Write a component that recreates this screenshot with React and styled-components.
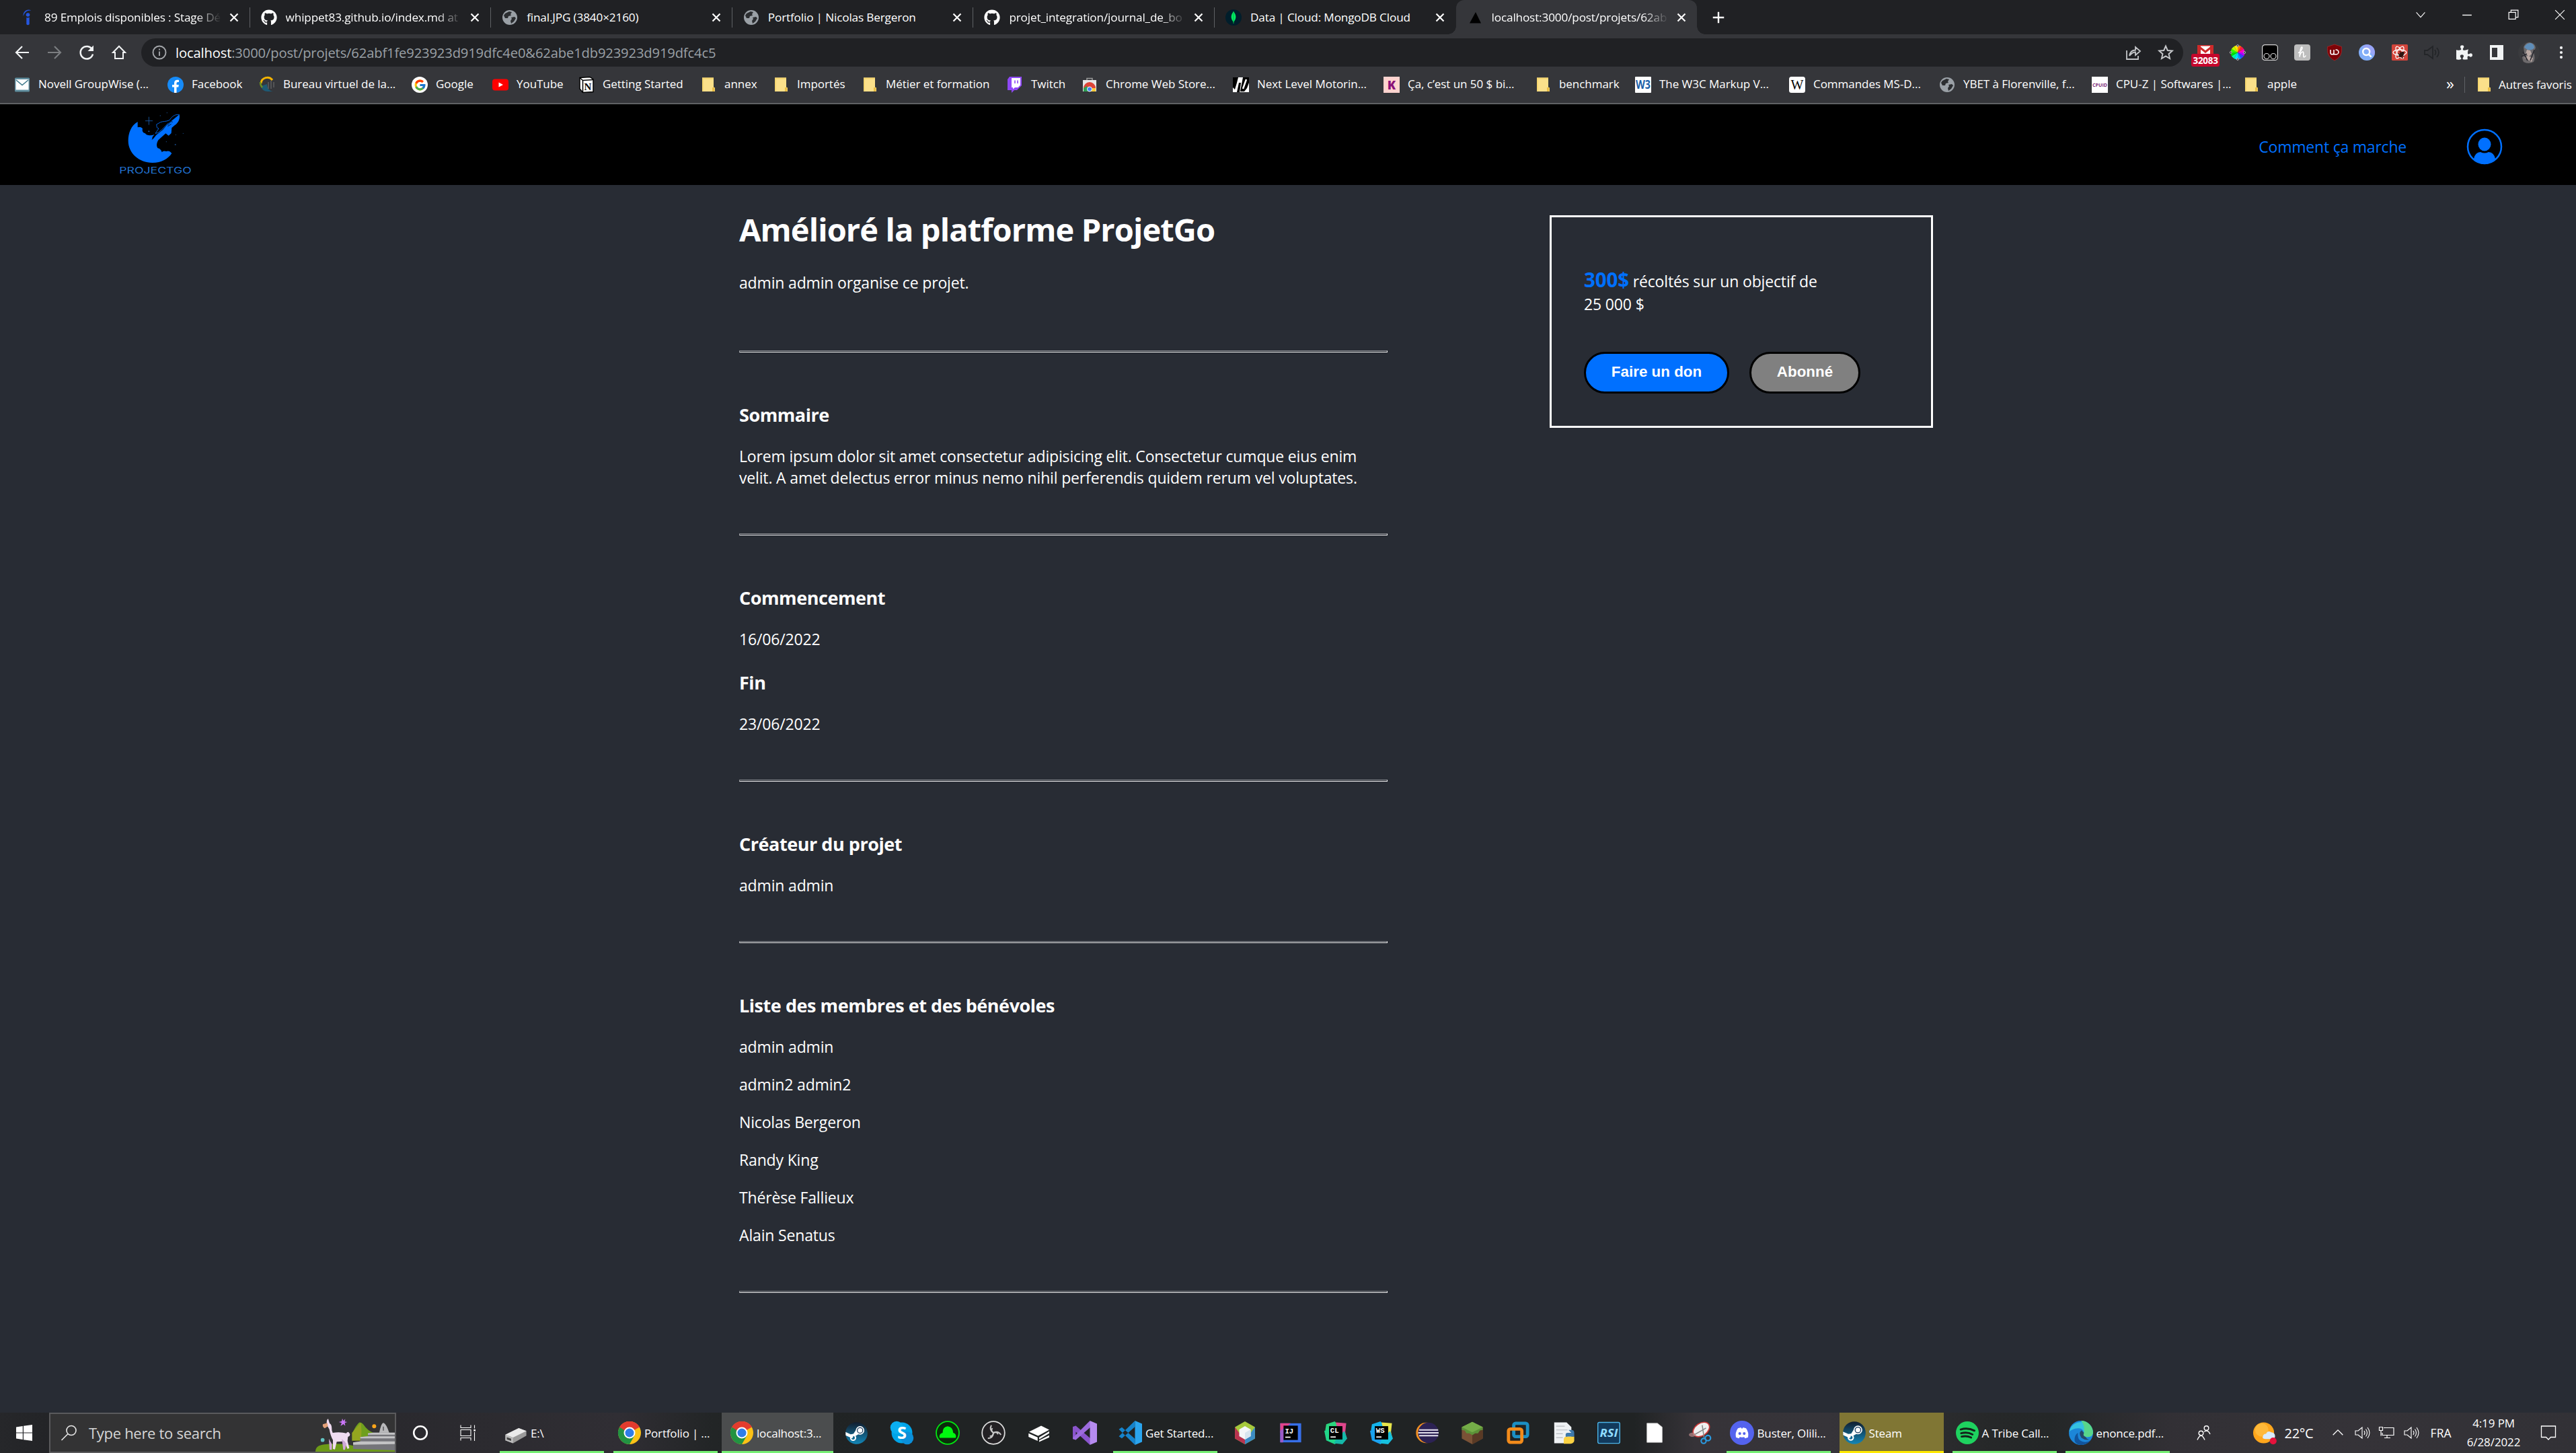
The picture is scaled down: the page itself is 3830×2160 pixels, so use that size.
import React from "react";
import styled, { createGlobalStyle, css } from "styled-components";
import { FaGithub, FaPuzzlePiece } from "react-icons/fa";
import { FcGoogle } from "react-icons/fc";

const UI = `"Open Sans", "Noto Sans", sans-serif`;
const BLUE = "#0070ff";

const GlobalStyle = createGlobalStyle`
  * { box-sizing: border-box; }
  html, body { margin: 0; padding: 0; background: #282c34; }
  body { width: 3830px; height: 2160px; overflow: hidden; font-family: ${UI}; color: #fff; }
  h1, h2, p, ul { margin: 0; padding: 0; }
  svg { display: block; flex: none; overflow: visible; }
`;

const Screen = styled.div`
  display: flex;
  flex-direction: column;
  width: 3830px;
  height: 2160px;
  overflow: hidden;
`;

/* ---------- drawings ---------- */

const Globe = () => (
  <g>
    <circle cx="12" cy="12" r="11" fill="#9aa0a6" />
    <path d="M5 6l6-3 4 1-2 3 1 2-4 1-1 3H5L3 9zM14 12l5-1 2 2-3 5-4 3-1-4 2-3z" fill="#2b2d30" />
  </g>
);

const Chrome = () => (
  <g>
    <circle cx="12" cy="12" r="12" fill="#fbc116" />
    <path d="M12 12L1.600 6A12 12 0 0 1 22.400 6z" fill="#e33b2e" />
    <path d="M1.600 6A12 12 0 0 0 12 24l5.200-9L12 12z" fill="#229342" />
    <path d="M1.600 6A12 12 0 0 1 22.400 6H12L7 9.500 6 13z" fill="#e33b2e" />
    <path d="M1.600 6l5.200 9L9 11z" fill="#229342" />
    <circle cx="12" cy="12" r="6" fill="#fff" />
    <circle cx="12" cy="12" r="4.600" fill="#2f7de9" />
  </g>
);

const Folder = () => (
  <g>
    <path d="M3 1.500h17v14l2 1v5.500h-19z" fill="#fbe08a" />
    <path d="M3 1.500h17v2H5v18H3z" fill="#f6d66f" />
    <path d="M18 16h3.500v6H18z" fill="#e9bd45" />
  </g>
);

const Cube = ({ label, a, b, c, d }) => (
  <g>
    <path d="M2 3l9-3 5 6-8 6-7-3z" fill={a} />
    <path d="M12 1l11 1-1 9 1 5-6 3z" fill={b} />
    <path d="M0 10l5-3 12 12-6 5-9-4z" fill={c} />
    <path d="M10 23l9 1 5-6-3-8-8 8z" fill={d} />
    <rect x="5" y="5" width="14" height="14" fill="#000" />
    <text x="6.200" y="12.300" fontSize="7.500" fontWeight="700" fill="#fff" fontFamily="Liberation Mono, monospace">{label}</text>
    <rect x="6.500" y="15.800" width="5.500" height="1.200" fill="#fff" />
  </g>
);

const Speaker = ({ color = "#fff", sw = 1.1 }) => (
  <g fill="none" stroke={color} strokeWidth={sw}>
    <path d="M2 9v6h4l6 5V4L6 9z" />
    <path d="M15 9q2 3 0 6M17.500 6.500q4 5.500 0 11M20 4q6 8 0 16" />
  </g>
);

const drawings = {
  indeed: (
    <g fill="#2557e0">
      <circle cx="12.500" cy="8" r="2.800" />
      <path d="M10.300 12q2.200 1 4.400-.6V22q-2.200 2.500-4.400 0z" />
      <path d="M5.500 10C5 3 11-1.500 17.500 1.500 11.500 .8 7.500 4 5.500 10z" />
    </g>
  ),
  globe: <Globe />,
  mongo: (
    <g>
      <circle cx="12" cy="12" r="12" fill="#001e2b" />
      <path d="M12 3c4 5 5 10 0 16-5-6-4-11 0-16z" fill="#00ed64" />
      <path d="M12 3v18" stroke="#00b54b" strokeWidth="1" />
    </g>
  ),
  azure: <path d="M13 4L4 20.500h16zM13 4l4 16.500h4z" fill="#000" />,
  close: <path d="M6.500 6.500l11 11M17.500 6.500l-11 11" stroke="#fff" strokeWidth="2.200" />,
  plus: <path d="M12 3v18M3 12h18" stroke="#fff" strokeWidth="2.600" />,
  chevDown: <path d="M5 8l7 8 7-8" stroke="#fff" strokeWidth="1.200" fill="none" />,
  minimize: <path d="M4.500 12.500h15" stroke="#fff" strokeWidth="1.500" />,
  restore: <path d="M4.500 8h11v11h-11zM8 8V4.500h11.500V16h-4" stroke="#fff" strokeWidth="1.300" fill="none" />,
  windowClose: <path d="M4.500 4.500l15 15M19.500 4.500l-15 15" stroke="#fff" strokeWidth="1.300" />,
  back: <path d="M22 12H3M12 3l-9 9 9 9" stroke="#f1f3f4" strokeWidth="2.200" fill="none" />,
  forward: <path d="M2 12h19M12 3l9 9-9 9" stroke="#7b7d80" strokeWidth="2.200" fill="none" />,
  reload: (
    <g>
      <path d="M20 7.500A9.300 9.300 0 1 0 21 14.500" stroke="#f1f3f4" strokeWidth="2.500" fill="none" />
      <path d="M22 1.500V10h-8.500z" fill="#f1f3f4" />
    </g>
  ),
  home: <path d="M12 2.800L3 12h3v9h12v-9h3z" stroke="#f1f3f4" strokeWidth="2" fill="none" />,
  info: (
    <g stroke="#a2a5a9" fill="none" strokeWidth="1.900">
      <circle cx="12" cy="12" r="9.500" />
      <path d="M12 10.500V17M12 6.500v2" />
    </g>
  ),
  share: (
    <g stroke="#c3c5c8" fill="none" strokeWidth="1.800">
      <path d="M2 9v13h17v-5" />
      <path d="M6 17c1-6 4-8.500 9-8.500V4l7 6-7 6v-4.500c-4 0-6 1.500-9 5.500z" />
    </g>
  ),
  star: <path d="M12 2.500l2.800 6.500 7 .6-5.300 4.600 1.600 6.900-6.100-3.700-6.100 3.700 1.600-6.900L2.200 9.600l7-.6z" stroke="#c8cacd" fill="none" strokeWidth="1.900" />,
  wheel: (
    <g>
      {["#ffe600", "#ff7a00", "#ff1744", "#ff00c8", "#b400ff", "#3a3cff", "#00a2ff", "#00e5ff", "#00ff9d", "#00e000", "#32ff00", "#b8ff00"].map((c, i) => (
        <path key={c} d="M12 12L12 1.500A10.500 10.500 0 0 1 17.250 2.900z" fill={c} transform={`rotate(${i * 30 - 30} 12 12)`} />
      ))}
      <g fill="#3b3c3f" stroke="#c8c8c8" strokeWidth=".8">
        <circle cx="12" cy="2" r="1.500" /><circle cx="12" cy="22" r="1.500" /><circle cx="1.800" cy="12" r="1.500" /><circle cx="22.200" cy="12" r="1.500" />
      </g>
    </g>
  ),
  tamper: (
    <g>
      <rect x=".6" y=".6" width="22.800" height="22.800" rx="4" fill="#000" stroke="#d4d4d4" strokeWidth="1.200" />
      <g fill="none" stroke="#d4d4d4" strokeWidth="1.200"><circle cx="7" cy="17.500" r="4" /><circle cx="17" cy="17.500" r="4" /></g>
    </g>
  ),
  honey: (
    <g>
      <rect width="24" height="24" rx="4" fill="#bdbdbd" />
      <path d="M6.500 12.500c4-2 6.500-7.500 5-8.500-2-.5-3 7-3.500 14.500 1-5.500 3-7.500 5-7.500 2.200.5-.5 7.500 1.500 8 1 0 2-1 2.500-2" stroke="#fff" strokeWidth="1.600" fill="none" strokeLinecap="round" />
    </g>
  ),
  ublock: (
    <g>
      <path d="M12 0l10.500 3.500c.5 9-.5 15-10.500 20.500C2 18.500 1 12.500 1.500 3.500z" fill="#7e0308" stroke="#b02a2a" strokeWidth=".7" />
      <path d="M6 8v4.500q0 2.300 2.500 2.300t2.500-2.300V8v6.800h3.500a3.300 3.300 0 0 0 0-6.800h-1" stroke="#fff" strokeWidth="1.600" fill="none" />
    </g>
  ),
  search1: (
    <g>
      <circle cx="12" cy="12" r="12" fill="#82aef8" />
      <path d="M12 0a12 12 0 0 1 11 17L5 3z" fill="#a99cf5" opacity=".6" />
      <circle cx="11.200" cy="11" r="5" fill="none" stroke="#fff" strokeWidth="2.400" />
      <path d="M14.800 14.800l3.800 3.800" stroke="#fff" strokeWidth="2.600" />
    </g>
  ),
  react: (
    <g>
      <rect width="24" height="24" rx="1.500" fill="#d3453b" />
      <g fill="none" stroke="#fff" strokeWidth="1.300">
        <ellipse cx="12" cy="12" rx="10" ry="4" />
        <ellipse cx="12" cy="12" rx="10" ry="4" transform="rotate(60 12 12)" />
        <ellipse cx="12" cy="12" rx="10" ry="4" transform="rotate(120 12 12)" />
      </g>
      <ellipse cx="14.500" cy="15" rx="3" ry="5" fill="#301512" transform="rotate(45 14.500 15)" />
      <path d="M9 13.500l10 5M12 10l4 11M11 17l7-6" stroke="#301512" strokeWidth="1.200" />
    </g>
  ),
  mute: (
    <g fill="none" stroke="#232528" strokeWidth="1.800">
      <path d="M1 9v6h4l8 6V3L5 9zM16 8q3 4 0 8M19 5q6 7 0 14" />
    </g>
  ),
  panel: <path d="M2 1h20v22H2zM5 5v14h8V5z" fillRule="evenodd" fill="#f1f3f4" />,
  avatar: (
    <g>
      <circle cx="16" cy="16" r="16" fill="#3a3b3e" />
      <path d="M8 8q3-7 9-7 8 1 9 8l-3 7q3 8 0 14-8 4-15 0-4-8 1-14z" fill="#6d6a6c" />
      <path d="M9 8q4-7 10-6 5 2 5 7-3 4-6 3-5 1-9-4z" fill="#5f8db8" />
      <path d="M13 12l5 1 2 5-4 4-5-4zM9 24l5-3 8 3-2 6z" fill="#b9a9a4" />
      <path d="M7 15l7 13M24 12l-6 16M5 22l8-4" stroke="#2a2a30" strokeWidth="1.600" />
    </g>
  ),
  dots: <g fill="#f1f3f4"><circle cx="12" cy="3.500" r="2.500" /><circle cx="12" cy="12" r="2.500" /><circle cx="12" cy="20.500" r="2.500" /></g>,

  mail: (
    <g>
      <rect x="1" y="1.500" width="22" height="21" rx="1.500" fill="#5f8d9e" />
      <rect x="2.500" y="4" width="19" height="15.500" fill="#fdfefe" />
      <path d="M3 5l9 7.500L21 5" fill="none" stroke="#3f7a8c" strokeWidth="1.600" />
    </g>
  ),
  bureau: (
    <g>
      <path d="M3 10A9.500 9.500 0 0 1 20 5" stroke="#f5b400" strokeWidth="3" fill="none" />
      <path d="M3 14c1 5 5 8 10 8h8c-6-1-9-5-9-11z" fill="#1d5a75" />
      <path d="M2 8q0 5 3 8" stroke="#6b8e23" strokeWidth="2.500" fill="none" />
      <path d="M14 8v10M18 6v12M22 8v8" stroke="#5e5f61" strokeWidth="1.500" />
    </g>
  ),
  youtube: <g><rect y="3.500" width="24" height="17" rx="4" fill="#f00" /><path d="M9.500 8.500l6.500 3.500-6.500 3.500z" fill="#fff" /></g>,
  notion: (
    <g>
      <path d="M2 1.500L17 .500l5 3.500v18.500l-15.500 1-4.500-5.500z" fill="#fff" stroke="#000" strokeWidth="1.500" />
      <path d="M2 1.500l4.500 4L22 4.500M6.500 5.500v18" stroke="#000" strokeWidth="1.500" fill="none" />
      <text x="8.500" y="20" fontSize="15" fontWeight="700" fontFamily="Liberation Serif, serif" fill="#000">N</text>
    </g>
  ),
  folder: <Folder />,
  twitch: (
    <g>
      <path d="M4 0h18v13l-7 7h-4l-4 4v-4H1V4z" fill="#8f48f7" />
      <path d="M7 2h13v10.500L16.500 16H12l-3 2.500V16H7z" fill="#fff" />
      <path d="M12 5.500v4.500M16 5.500v4.500" stroke="#8f48f7" strokeWidth="1.600" />
    </g>
  ),
  webstore: (
    <g>
      <path d="M8 5V2.500h8V5" fill="none" stroke="#9a9a9a" strokeWidth="1.500" />
      <rect x="2" y="5" width="20" height="17" fill="#e6e6e6" />
      <path d="M3 17a9 9 0 0 1 18 0z" fill="#dc4437" />
      <path d="M3 22v-5l5-3 4 8z" fill="#2ea052" />
      <path d="M21 22v-5h-6l-4 5z" fill="#fcc934" />
      <circle cx="12" cy="18.500" r="3.500" fill="#4285f4" stroke="#fff" strokeWidth="1" />
    </g>
  ),
  nl: (
    <g>
      <rect y="1" width="24" height="22" fill="#fff" />
      <path d="M0 1h8l-2 8-3 10-3-3zM9 9l3 0-2 14H6zM15 1h9v8l-3 8-4 5h-6z" fill="#000" />
      <path d="M15 18l5-14" stroke="#fff" strokeWidth="2.500" />
    </g>
  ),
  klett: <g><rect width="24" height="24" fill="#ffd3cf" /><text x="12" y="18.500" textAnchor="middle" fontSize="18" fontWeight="800" fill="#8b1078" fontFamily="Open Sans, sans-serif">K</text></g>,
  w3: <g><rect width="24" height="24" fill="#fff" rx="1" /><text x="12" y="18" textAnchor="middle" textLength="22" lengthAdjust="spacingAndGlyphs" fontSize="18" fontWeight="700" fill="#1b5fa8" fontFamily="Open Sans, sans-serif">W3</text></g>,
  wiki: <g><rect width="24" height="24" rx="3.500" fill="#fff" /><text x="12" y="18.500" textAnchor="middle" fontSize="20" fill="#000" fontFamily="Liberation Serif, serif">W</text></g>,
  cpuid: <g><rect width="24" height="24" fill="#fff" /><text x="12" y="14.500" textAnchor="middle" textLength="22" lengthAdjust="spacingAndGlyphs" fontSize="6.500" fontWeight="700" fill="#80307c" fontFamily="Open Sans, sans-serif">CPUID</text></g>,

  windows: <path d="M0 3.400L9.800 2v9.500H0zM11 1.800L24 0v11.500H11zM0 12.600h9.800V22L0 20.600zM11 12.600h13V24l-13-1.800z" fill="#fff" />,
  magnifier: <g fill="none" stroke="#e8e8e8" strokeWidth="1.600"><circle cx="15" cy="8.500" r="7" /><path d="M10 13.500L.5 23" /></g>,
  cortana: <circle cx="12" cy="12" r="9.800" fill="none" stroke="#fff" strokeWidth="2.600" />,
  taskview: (
    <g fill="none" stroke="#fff" strokeWidth="1.100">
      <path d="M1 .5v4h15v-4M1 23.500v-4h15v4M1 7.500h15v9H1zM21.500 .5v5M21.500 11v13" />
      <rect x="20.300" y="7" width="2.600" height="2.600" fill="#fff" stroke="none" />
    </g>
  ),
  drive: (
    <g>
      <path d="M1 14l14-7 8 3v5L9 23l-8-3z" fill="#9a9a9a" />
      <path d="M1 14l14-7 8 3-14 7z" fill="#eaeaea" />
      <path d="M1 14l8 3v6l-8-3z" fill="#bcbcbc" />
      <path d="M2.500 16.500l4.500 1.700v2.300l-4.500-1.700z" fill="#444" />
    </g>
  ),
  chrome: <Chrome />,
  steam: (
    <g>
      <defs>
        <linearGradient id="steamDisc" x1="0" y1="0" x2="0" y2="1"><stop offset="0" stopColor="#111d2e" /><stop offset="1" stopColor="#1387b8" /></linearGradient>
        <clipPath id="steamClip"><circle cx="12" cy="12" r="11.900" /></clipPath>
      </defs>
      <circle cx="12" cy="12" r="11.900" fill="url(#steamDisc)" />
      <g clipPath="url(#steamClip)">
        <path d="M-1 11.500l8 3.300q2-.6 3.500.5l5-3 .5-3.500-4.500-.5-2.800 4.500-3 .5-6.700-3z" fill="#fff" />
        <path d="M0 13l8 3.500" stroke="#fff" strokeWidth="2.500" />
      </g>
      <circle cx="15.800" cy="9" r="4" fill="#16395c" stroke="#fff" strokeWidth="1.200" />
      <circle cx="15.800" cy="9" r="2.500" fill="#fff" />
      <circle cx="8.300" cy="17" r="2.600" fill="none" stroke="#fff" strokeWidth="1.500" />
    </g>
  ),
  skype: (
    <g>
      <circle cx="12" cy="12" r="10.300" fill="#00a4e8" /><circle cx="6.800" cy="6.800" r="6.300" fill="#0aaef0" /><circle cx="17.200" cy="17.200" r="6.300" fill="#0b8fd9" />
      <text x="12" y="18" textAnchor="middle" fontSize="17" fontWeight="700" fill="#fff" fontFamily="Open Sans, sans-serif">S</text>
    </g>
  ),
  greencloud: (
    <g>
      <circle cx="12" cy="12" r="11.300" fill="#0b2c0b" stroke="#00e810" strokeWidth="1.200" />
      <path d="M4 17q-1-4 3-5 0-6 5-6.500 5 .5 5.500 6.500 3.500 1 2.500 5z" fill="#00fa10" />
    </g>
  ),
  obs: (
    <g>
      <circle cx="12" cy="12" r="11.200" fill="#232124" stroke="#dcdcdc" strokeWidth="1.200" />
      {[0, 120, 240].map((r) => <path key={r} d="M10 4.500q-2.500 4.500 2 7.500 3.500-1.500 4.500 1.500" fill="none" stroke="#c9c9c9" strokeWidth="1.300" transform={`rotate(${r} 12 12)`} />)}
    </g>
  ),
  whitebox: (
    <g fill="#fff">
      <path d="M2 11l12-6 8 4-11 6z" /><path d="M1.500 12.500l9 4V20l-9-4zM12 16.500l10-6v2l-10 6zM12 19.500l10-5v2L12 21z" />
    </g>
  ),
  vs: (
    <g>
      <path d="M0 6l3-1 15 13-1 6L3 11v8l-3-1z" fill="#8a55cc" />
      <path d="M17 0l1 6L3 19l-3-1v-1z" fill="#9c6bdd" />
      <path d="M17 0l7 3v18l-7 3z" fill="#b68bf0" />
    </g>
  ),
  vscode: (
    <g>
      <path d="M17 0v6L4 17.500 1 15.500zM17 24v-6L4 6.500 1 8.500z" fill="#1583cc" />
      <path d="M17 0l7 3v18l-7 3z" fill="#2aa4ee" />
    </g>
  ),
  netbeans: (
    <g>
      <path d="M12 0l10.500 6v12L12 24 1.500 18V6z" fill="#a6c93c" />
      <path d="M1.500 6v12L12 24v-8L6 12z" fill="#b8334f" />
      <path d="M22.500 6v12L12 24v-8l6-4z" fill="#3b8cc4" />
      <path d="M12 5l6 3.500v7L12 19l-6-3.500v-7z" fill="#f4f7f8" /><path d="M12 12v7l6-3.500v-7z" fill="#d8e6ef" />
    </g>
  ),
  intellij: (
    <g>
      <path d="M1 2h22v20H1z" fill="#376fe8" /><path d="M1 12L12 2H1z" fill="#e0438c" /><path d="M1 10l6-5-3 17H1z" fill="#9b5bc8" />
      <rect x="4.500" y="4.500" width="15" height="15" fill="#000" />
      <text x="6" y="12.500" fontSize="7.500" fontWeight="700" fill="#fff" fontFamily="Liberation Mono, monospace">IJ</text>
      <rect x="6.300" y="16" width="5.500" height="1.200" fill="#fff" />
    </g>
  ),
  clion: <Cube label="CL" a="#2bd67f" b="#e0468c" c="#21d789" d="#14b8a8" />,
  webstorm: <Cube label="WS" a="#14b4ec" b="#e6e44b" c="#1aa2f0" d="#16c0de" />,
  eclipse: (
    <g>
      <circle cx="11" cy="12" r="10.800" fill="#f29022" /><circle cx="13.200" cy="12" r="10.800" fill="#2c2254" />
      <path d="M3.500 9h20M2.500 12h21.500M3.500 15h20" stroke="#e6e4f0" strokeWidth="1.500" />
    </g>
  ),
  grass: (
    <g>
      <path d="M12 .500L23 6v12l-11 6-11-6V6z" fill="#7a5236" /><path d="M12 12v12l11-6V6z" fill="#593a25" />
      <path d="M12 .500L23 6v3l-3 .500-2 3-3 0-3 2-3-2-3 0-2-3L1 9V6z" fill="#5c9238" /><path d="M12 .500L23 6l-11 5.500L1 6z" fill="#74ad48" />
    </g>
  ),
  vmware: (
    <g fill="none" strokeWidth="3.400">
      <rect x="7.500" y="2" width="14.500" height="14" rx="2" stroke="#1b8fc4" /><rect x="2" y="8" width="14" height="14" rx="2" stroke="#f38b1a" />
    </g>
  ),
  python: (
    <g>
      <path d="M2 1h13l5 5v17H2z" fill="#eef1f3" /><path d="M4 5h9M4 9h12M4 13h7M4 17h7" stroke="#b7bcc0" strokeWidth=".8" />
      <path d="M17 9h3q3 0 3 3v4h-7l-2 2v-4q0-2 2-2h4" fill="#3d78aa" /><path d="M12 19q0-3 3-3h8v4q0 3-4 3.500h-7z" fill="#fbd243" />
    </g>
  ),
  rsi: <g><rect x=".5" y="1" width="23" height="22" rx="1.500" fill="#123a5c" stroke="#4bb4e8" strokeWidth="1" /><text x="12" y="16" textAnchor="middle" textLength="19" lengthAdjust="spacingAndGlyphs" fontSize="11" fontStyle="italic" fontWeight="700" fill="#8fdcff" fontFamily="Open Sans, sans-serif">RSI</text></g>,
  file: <path d="M4 2h11l5 4v16H4z" fill="#fff" stroke="#c9c9c9" strokeWidth=".6" />,
  snip: (
    <g>
      <ellipse cx="13" cy="8.500" rx="9.500" ry="6.500" transform="rotate(-35 13 8.500)" fill="#f0f0f0" stroke="#cc3a3a" strokeWidth="1.200" />
      <path d="M5 14.500l13-7.500M14 4l2 13" stroke="#8a8a8a" strokeWidth="1.100" />
      <ellipse cx="3.500" cy="14" rx="3.500" ry="2.200" fill="#b88" opacity=".7" />
      <g fill="none" stroke="#2b9ae0" strokeWidth="1.500"><circle cx="20" cy="17.500" r="2.800" /><circle cx="15.500" cy="20.500" r="2.600" /></g>
    </g>
  ),
  discord: (
    <g>
      <circle cx="12" cy="12" r="12" fill="#5463ee" />
      <path d="M6 16.500q-1-5 2-9l3-.8.5 1h1l.5-1 3 .8q3 4 2 9l-3 1-.8-1.300q-2.200.6-4.400 0L9 17.500z" fill="#fff" />
      <circle cx="9.800" cy="12.700" r="1.400" fill="#5463ee" /><circle cx="14.200" cy="12.700" r="1.400" fill="#5463ee" />
    </g>
  ),
  spotify: (
    <g>
      <circle cx="12" cy="12" r="12" fill="#1ed25f" />
      <path d="M5 8.500q7.500-2.300 14.500 1.300M5.500 12.500q6.500-1.800 12 1.200M6 16q5.500-1.300 10 1" fill="none" stroke="#14201a" strokeWidth="2" strokeLinecap="round" />
    </g>
  ),
  edge: (
    <g>
      <circle cx="12" cy="12" r="12" fill="#1c86d8" />
      <path d="M.3 11A12 12 0 0 1 24 12q-1 5-7 4-4-1-2-4-1-5-6-4.500Q3 8 .3 11z" fill="#35c1e0" />
      <path d="M12 0a12 12 0 0 1 12 12q-1 5-7 4-4-1-2-4 1-8-3-12z" fill="#58d68a" />
      <path d="M9 12q-1 8 6 9 4 .5 7-2-4 5-10 5-8-1-6-8 1-3 3-4z" fill="#11549c" />
      <path d="M12.500 9.500q-3.500 3 0 7.500 4 3 9 1.500-3 1-5-2.500-3-1-1.500-4z" fill="#29303a" opacity=".7" />
    </g>
  ),
  people: (
    <g fill="none" stroke="#fff" strokeWidth="1.400">
      <circle cx="15.500" cy="5" r="3.300" /><circle cx="7.500" cy="12.500" r="3.300" /><path d="M12 10.500q6-4 9 3.500M2 22.500q5.500-12.500 11 0" />
    </g>
  ),
  weather: (
    <g>
      <circle cx="11" cy="12" r="11" fill="#ffa61c" /><circle cx="9" cy="9" r="7" fill="#ffb93a" />
      <path d="M10 17q0-4 3.500-4 2-4 5.500-1.500 4 .5 4 4 0 3-3 3h-7q-3 0-3-1.500z" fill="#d8ebfd" />
      <circle cx="21" cy="20.500" r="3.600" fill="#e5123c" />
    </g>
  ),
  chevUp: <path d="M4 15.500l8-8 8 8" stroke="#fff" strokeWidth="1.500" fill="none" />,
  speaker: <Speaker />,
  monitor: (
    <g fill="none" stroke="#fff" strokeWidth="1.200">
      <path d="M8 4.500h15v11H6V12M13 15.500v4M9 19.500h9" /><path d="M1.500 3.500h5v5h-5zM4 8.500v8" />
    </g>
  ),
  notification: <path d="M1.500 2h21v16.500h-7L12 22l-3.500-3.500h-7z" stroke="#fff" strokeWidth="1.300" fill="none" />,
};

const glyphs = { github: [FaGithub, "#fff"], puzzle: [FaPuzzlePiece, "#f1f3f4"] };

const GoogleDisc = styled.span`
  display: flex;
  align-items: center;
  justify-content: center;
  width: 24px;
  height: 24px;
  border-radius: 50%;
  background: #fff;
`;

function Icon({ name, size = 24 }) {
  if (name === "google") return <GoogleDisc><FcGoogle size={19} /></GoogleDisc>;
  if (name === "facebook")
    return (
      <svg width={size} height={size} viewBox="0 0 24 24">
        <circle cx="12" cy="12" r="12" fill="#168bf8" />
        <path d="M10 24v-8.500H7V12h3V9.400C10 6.300 11.800 4.700 14.500 4.700c1.300 0 2.500.2 2.500.2v3h-1.500c-1.500 0-2 .9-2 1.900V12h3.300l-.5 3.500h-2.800V24z" fill="#fff" />
      </svg>
    );
  if (glyphs[name]) {
    const [G, color] = glyphs[name];
    return <G size={size} color={color} />;
  }
  const box = name === "avatar" ? "0 0 32 32" : "0 0 24 24";
  return <svg width={size} height={size} viewBox={box}>{drawings[name]}</svg>;
}

/* ---------- browser frame ---------- */

const TabStrip = styled.div`
  display: flex;
  height: 51px;
  flex: none;
  padding-left: 13px;
  background: #202124;
`;

const TabItem = styled.div`
  position: relative;
  display: flex;
  align-items: center;
  flex: none;
  width: 358.600px;
  height: 51px;
  padding-left: 16px;
  ${(p) => !p.$active && !p.$last && css`
    &::after {
      content: "";
      width: 1px;
      height: 30px;
      margin-left: 11px;
      background: #5f6165;
    }
  `}
  ${(p) => p.$active && css`
    border-radius: 12px 12px 0 0;
    background: #35363a;
    &::before, &::after {
      content: "";
      position: absolute;
      bottom: 0;
      width: 12px;
      height: 12px;
    }
    &::before { left: -12px; background: radial-gradient(circle at 0 0, #202124 11.5px, #35363a 12px); }
    &::after { right: -12px; background: radial-gradient(circle at 100% 0, #202124 11.5px, #35363a 12px); }
  `}
`;

const TabTitle = styled.span`
  width: 263px;
  margin-left: 13px;
  margin-right: 7px;
  overflow: hidden;
  white-space: nowrap;
  font-size: 17.200px;
  letter-spacing: -0.160px;
  line-height: 26px;
  ${(p) => p.$fade && css`
    mask-image: linear-gradient(90deg, #000 calc(100% - 38px), transparent);
  `}
`;

const NewTab = styled.div`
  display: flex;
  align-items: center;
  width: 22px;
  margin-left: 21px;
`;

const WindowControls = styled.div`
  display: flex;
  align-items: center;
  gap: 47px;
  height: 43px;
  margin-left: auto;
  padding-right: 13px;
`;

const Toolbar = styled.div`
  display: flex;
  align-items: center;
  height: 54px;
  flex: none;
  padding: 0 11px 0 21px;
  background: #35363a;
`;

const NavButtons = styled.div`
  display: flex;
  align-items: center;
  gap: 24px;
  width: 189px;
`;

const Omnibox = styled.div`
  display: flex;
  align-items: center;
  width: 3036px;
  height: 42px;
  padding: 0 14px 0 15px;
  border-radius: 21px;
  background: #202124;
`;

const Url = styled.span`
  flex: 1;
  margin-left: 12px;
  font-size: 20.200px;
  letter-spacing: -0.150px;
  color: #9aa0a6;
  white-space: nowrap;
  & b { font-weight: 400; color: #fff; }
`;

const OmniActions = styled.div`
  display: flex;
  gap: 24px;
`;

const Extensions = styled.div`
  display: flex;
  align-items: center;
  justify-content: space-around;
  flex: 1;
  margin-left: 9px;
  margin-right: -13px;
`;

const ExtSlot = styled.span`
  position: relative;
  display: flex;
  align-items: center;
  justify-content: center;
  width: 48px;
  height: 42px;
`;

const MailBadge = styled.span`
  position: absolute;
  left: 3px;
  top: 23px;
  width: 42px;
  height: 19px;
  border-radius: 3px;
  background: #c5062b;
  font-size: 13.500px;
  font-weight: 700;
  line-height: 20px;
  text-align: center;
  letter-spacing: -0.300px;
`;

const Bookmarks = styled.div`
  display: flex;
  align-items: center;
  height: 48px;
  flex: none;
  padding-left: 21px;
  padding-bottom: 6px;
  background: #35363a;
`;

const Bookmark = styled.div`
  display: flex;
  align-items: center;
  flex: none;
  gap: 12px;
  width: ${(p) => p.$w}px;
  white-space: nowrap;
  font-size: 17px;
  line-height: 24px;
  letter-spacing: -0.040px;
`;

const Label = styled.span`
  padding-bottom: 2px;
`;

const More = styled.span`
  width: 27px;
  font-size: 24px;
  line-height: 24px;
  padding-bottom: 5px;
`;

const OtherBookmarks = styled.div`
  display: flex;
  align-items: center;
  gap: 10px;
  height: 24px;
  padding-left: 16px;
  border-left: 1px solid #5f6165;
  font-size: 17px;
  letter-spacing: -0.050px;
  white-space: nowrap;
`;

const FrameLine = styled.div`
  height: 2px;
  flex: none;
  background: #5f6164;
`;

/* ---------- site ---------- */

const SiteHeader = styled.header`
  display: flex;
  align-items: center;
  height: 120px;
  flex: none;
  padding: 0 109px 0 160px;
  background: #000;
`;

const SiteNav = styled.nav`
  display: flex;
  align-items: center;
  gap: 89px;
  margin-left: auto;
  padding-top: 5px;
`;

const HelpLink = styled.a`
  font-size: 23px;
  letter-spacing: -0.220px;
  color: ${BLUE};
`;

const Main = styled.main`
  display: flex;
  align-items: flex-start;
  gap: 241px;
  flex: 1;
  padding-left: 1099px;
  background: #282c34;
`;

const Article = styled.article`
  width: 964px;
  padding-top: 34px;
`;

const Title = styled.h1`
  font-size: 47px;
  line-height: 64px;
  font-weight: 700;
  letter-spacing: -0.880px;
  white-space: nowrap;
  margin-bottom: 31px;
`;

const Text = styled.p`
  font-size: 23px;
  line-height: 32px;
  letter-spacing: -0.165px;
`;

const Rule = styled.div`
  height: 3px;
  margin-top: ${(p) => p.$top || 67}px;
  border: 1px solid;
  border-color: #8f9196 #eee #eee #8f9196;
`;

const Section = styled.section`
  display: flex;
  flex-direction: column;
  gap: 28px;
  margin-top: 72px;
`;

const Heading = styled.h2`
  margin-bottom: -3px;
  font-size: 27px;
  line-height: 41px;
  font-weight: 700;
  letter-spacing: -0.450px;
`;

const Members = styled.ul`
  display: flex;
  flex-direction: column;
  gap: 24px;
  list-style: none;
`;

const Card = styled.aside`
  width: 570px;
  height: 316px;
  margin-top: 45px;
  padding: 78px 0 0 48px;
  border: 3px solid #fff;
`;

const Goal = styled.p`
  width: 365px;
  height: 68px;
  font-size: 23px;
  line-height: 34px;
  letter-spacing: -0.150px;
`;

const Amount = styled.strong`
  font-size: 29.500px;
  line-height: 28px;
  color: ${BLUE};
`;

const Actions = styled.div`
  display: flex;
  gap: 30px;
  margin-top: 54px;
`;

const Button = styled.button`
  width: ${(p) => p.$w}px;
  height: 62px;
  padding: 0 0 2px;
  border: 3px solid #000;
  border-radius: 31px;
  background: ${(p) => p.$bg};
  color: #fff;
  font: 700 22.400px "Liberation Sans", Arial, sans-serif;
`;

const Logo = () => (
  <svg width="140" height="120" viewBox="0 0 420 360">
    <path d="M134 78C104 95 92 130 92 163c0 55 48 98 108 98 40 0 70-18 86-42-8-12-18-12-24-9-10-4-17-1-20 4-2-10-10-17-18-18-8-10-5-24 2-36l-27-6c-1-6 3-12 10-19-16 6-35 6-42-6-10-1-14-11-11-20-5-8-14-8-22-6z" fill={BLUE} />
    <path d="M320 46c4 18-4 36-20 47l-14 12-2 24-12 11-13-10-38 34-12 4-10-8 18-23 30-24 24-28z" fill={BLUE} />
    <path d="M320 46c-22-2-34 10-44 25-18 8-30 4-40 9l-18 10 2 14 8 4-15 22 12-3 15-12 30-30" fill="none" stroke={BLUE} strokeWidth="2.500" />
    <path d="M214 134l-16 24M268 92l14-15 8 2M284 88l-16 10" fill="none" stroke="#000" strokeWidth="2.500" />
    <path d="M184 56v36M168 74h33" stroke="#1c5fae" strokeWidth="2.500" />
    <circle cx="184" cy="121" r="3" fill="#1c5fae" />
    <g fill="#174a86">
      <circle cx="235" cy="51" r="2" /><circle cx="265" cy="38" r="2" /><circle cx="337" cy="130" r="2" /><circle cx="304" cy="136" r="2" /><circle cx="302" cy="180" r="3" /><circle cx="262" cy="167" r="2" />
    </g>
    <text x="52" y="308" textLength="322" lengthAdjust="spacingAndGlyphs" fontSize="39" fontFamily="Inter, sans-serif" fontWeight="400" fill="#2272d2">PROJECTGO</text>
  </svg>
);

const Profile = () => (
  <svg width="54" height="54" viewBox="0 0 54 54">
    <circle cx="27" cy="27" r="25" fill="none" stroke={BLUE} strokeWidth="2.500" />
    <ellipse cx="27" cy="23.500" rx="9.500" ry="10" fill={BLUE} />
    <path d="M11 45q2-9.500 10-10 6 3 12 0 8 .5 10 10-7 8-16 8t-16-8z" fill={BLUE} />
  </svg>
);

/* ---------- taskbar ---------- */

const Taskbar = styled.footer`
  display: flex;
  align-items: stretch;
  height: 60px;
  flex: none;
  background: linear-gradient(90deg, #26272a 0, #232427 70px, #2c2b30 740px, #302e34 920px, #222526 1060px, #202324 1300px, #202324 2430px, #363338 2520px, #363439 2720px, #262829 2960px, #242728 3050px, #323035 3230px, #353338 3500px, #323136 3830px);
`;

const Slot = styled.div`
  display: flex;
  align-items: center;
  justify-content: center;
  flex: none;
  width: ${(p) => p.$w}px;
  margin-left: ${(p) => p.$ml || 0}px;
`;

const SearchBox = styled.div`
  display: flex;
  align-items: center;
  width: 516px;
  flex: none;
  margin-left: 1px;
  padding-left: 16px;
  border: 2px solid #5a5a5c;
  background: #333334;
`;

const SearchHint = styled.span`
  flex: 1;
  margin-left: 17px;
  font-size: 22px;
  letter-spacing: -0.300px;
  color: #d6d6d6;
`;

const Task = styled.div`
  display: flex;
  align-items: center;
  flex: none;
  gap: 5px;
  width: ${(p) => p.$w || 155}px;
  margin-left: ${(p) => p.$ml || 0}px;
  padding-left: ${(p) => p.$pl || 5}px;
  background: ${(p) => p.$bg || "transparent"};
  box-shadow: inset 0 -3px 0 ${(p) => p.$line || "#76f074"};
  font-size: 17px;
  letter-spacing: -0.170px;
  white-space: nowrap;
`;

const Temperature = styled.span`
  width: 61px;
  padding-left: 12px;
  font-size: 20px;
  letter-spacing: -0.300px;
  align-self: center;
  white-space: nowrap;
`;

const Clock = styled.div`
  display: flex;
  flex-direction: column;
  align-items: center;
  justify-content: center;
  width: 104px;
  font-size: 17px;
  line-height: 28px;
  letter-spacing: -0.100px;
`;

const Language = styled(Slot)`
  font-size: 17.500px;
  letter-spacing: 0;
`;

const Llama = () => (
  <svg width="118" height="56" viewBox="0 0 354 168">
    <path d="M170 74q12-24 25-36 10-2 18 8 20 30 50 40l-40 30h-58z" fill="#6f9f1e" />
    <path d="M163 84q25-30 40-45 5 40 0 80h-40z" fill="#94a51f" />
    <path d="M0 168q0-28 40-32 70-10 140 8h174v24z" fill="#6c9a17" />
    <path d="M284 86q10-50 20-46 12 4 26 46z" fill="#b9b9bb" /><path d="M303 56v18" stroke="#4c4c4e" strokeWidth="4" />
    <path d="M234 86l24-3h96v24H234zM200 103l30-3h124v24H200zM168 127l30-5h156v40l-186-6z" fill="#75757a" />
    <path d="M234 86l24-3h96v9H234zM200 103l30-3h124v9H200zM168 127l30-5h156v12l-186 3z" fill="#c3c3c5" />
    <path d="M50 42q0-20 7-20l6 20q11 4 10 30l4 12q30-6 60 2 10-12 16 2 4 10-8 14l-2 18 8 32-8 4-14-34-34 2-8 34-9-2 0-40q-10-16-16-48l-12-20z" fill="#f0dcf1" />
    <path d="M60 110l14 26-1 24-10-1zM118 112l20 20-6 28-8 0z" fill="#cfa6d8" />
    <path d="M33 46l20-6 3 14-14 10q-12-6-9-18z" fill="#e3a078" />
    <path d="M120 20l5 11 8-9-2 12 11 2-11 4 2 13-8-8-13 8 5-13-13-4 13-4z" fill="#c976f5" />
    <circle cx="262" cy="55" r="9" fill="#fca51a" /><circle cx="32" cy="116" r="8.500" fill="#62c3c2" />
  </svg>
);

/* ---------- data ---------- */

const tabs = [
  { icon: "indeed", title: "89 Emplois disponibles : Stage Dé", fade: true },
  { icon: "github", title: "whippet83.github.io/index.md at", fade: true },
  { icon: "globe", title: "final.JPG (3840×2160)" },
  { icon: "globe", title: "Portfolio | Nicolas Bergeron" },
  { icon: "github", title: "projet_integration/journal_de_bo", fade: true },
  { icon: "mongo", title: "Data | Cloud: MongoDB Cloud", last: true },
  { icon: "azure", title: "localhost:3000/post/projets/62ab", fade: true, active: true },
];

const bookmarks = [
  ["mail", "Novell GroupWise (...", 228],
  ["facebook", "Facebook", 136],
  ["bureau", "Bureau virtuel de la...", 227],
  ["google", "Google", 120],
  ["youtube", "YouTube", 128],
  ["notion", "Getting Started", 181],
  ["folder", "annex", 108],
  ["folder", "Importés", 132],
  ["folder", "Métier et formation", 216],
  ["twitch", "Twitch", 111],
  ["webstore", "Chrome Web Store...", 225],
  ["nl", "Next Level Motorin...", 224],
  ["klett", "Ça, c’est un 50 $ bi...", 225],
  ["folder", "benchmark", 149],
  ["w3", "The W3C Markup V...", 229],
  ["wiki", "Commandes MS-D...", 223],
  ["globe", "YBET à Florenville, f...", 227],
  ["cpuid", "CPU-Z | Softwares |...", 225],
  ["folder", "apple", 302],
];

const extensions = ["wheel", "tamper", "honey", "ublock", "search1", "react", "mute", "puzzle", "panel"];
const members = ["admin admin", "admin2 admin2", "Nicolas Bergeron", "Randy King", "Thérèse Fallieux", "Alain Senatus"];
const pinnedLeft = ["steam", "skype", "greencloud", "obs", "whitebox", "vs"];
const pinnedRight = ["netbeans", "intellij", "clion", "webstorm", "eclipse", "grass", "vmware", "python", "rsi", "file", "snip"];

export default function App() {
  return (
    <Screen>
      <GlobalStyle />
      <TabStrip>
        {tabs.map((t) => (
          <TabItem key={t.title} $active={t.active} $last={t.last}>
            <Icon name={t.icon} />
            <TabTitle $fade={t.fade}>{t.title}</TabTitle>
            <Icon name="close" />
          </TabItem>
        ))}
        <NewTab><Icon name="plus" size={22} /></NewTab>
        <WindowControls>
          <Icon name="chevDown" size={22} />
          <Icon name="minimize" size={22} />
          <Icon name="restore" size={22} />
          <Icon name="windowClose" size={22} />
        </WindowControls>
      </TabStrip>

      <Toolbar>
        <NavButtons>
          <Icon name="back" /><Icon name="forward" /><Icon name="reload" /><Icon name="home" />
        </NavButtons>
        <Omnibox>
          <Icon name="info" />
          <Url><b>localhost</b>:3000/post/projets/62abf1fe923923d919dfc4e0&amp;62abe1db923923d919dfc4c5</Url>
          <OmniActions><Icon name="share" /><Icon name="star" /></OmniActions>
        </Omnibox>
        <Extensions>
          <ExtSlot>
            <svg width="24" height="24" viewBox="0 0 24 24">
              <rect y="1" width="24" height="15" fill="#cf2a2a" /><path d="M5 2.500h14V16H5z" fill="#fff" /><path d="M3 2l9 7 9-7v4l-9 7-9-7z" fill="#cf2a2a" />
            </svg>
            <MailBadge>32083</MailBadge>
          </ExtSlot>
          {extensions.map((n) => <ExtSlot key={n}><Icon name={n} /></ExtSlot>)}
          <ExtSlot><Icon name="avatar" size={32} /></ExtSlot>
          <ExtSlot><Icon name="dots" size={20} /></ExtSlot>
        </Extensions>
      </Toolbar>

      <Bookmarks>
        {bookmarks.map(([icon, label, w]) => (
          <Bookmark key={label} $w={w}><Icon name={icon} /><Label>{label}</Label></Bookmark>
        ))}
        <More>»</More>
        <OtherBookmarks><Icon name="folder" /><Label>Autres favoris</Label></OtherBookmarks>
      </Bookmarks>
      <FrameLine />

      <SiteHeader>
        <Logo />
        <SiteNav>
          <HelpLink>Comment ça marche</HelpLink>
          <Profile />
        </SiteNav>
      </SiteHeader>

      <Main>
        <Article>
          <Title>Amélioré la platforme ProjetGo</Title>
          <Text>admin admin organise ce projet.</Text>
          <Rule $top={85} />
          <Section>
            <Heading>Sommaire</Heading>
            <Text>
              Lorem ipsum dolor sit amet consectetur adipisicing elit. Consectetur cumque eius enim
              <br />
              velit. A amet delectus error minus nemo nihil perferendis quidem rerum vel voluptates.
            </Text>
          </Section>
          <Rule />
          <Section>
            <Heading>Commencement</Heading>
            <Text>16/06/2022</Text>
            <Heading>Fin</Heading>
            <Text>23/06/2022</Text>
          </Section>
          <Rule />
          <Section>
            <Heading>Créateur du projet</Heading>
            <Text>admin admin</Text>
          </Section>
          <Rule />
          <Section>
            <Heading>Liste des membres et des bénévoles</Heading>
            <Members>
              {members.map((m) => <li key={m}><Text>{m}</Text></li>)}
            </Members>
          </Section>
          <Rule />
        </Article>
        <Card>
          <Goal><Amount>300$</Amount> récoltés sur un objectif de 25&nbsp;000&nbsp;$</Goal>
          <Actions>
            <Button $w={216} $bg={BLUE}>Faire un don</Button>
            <Button $w={165} $bg="#808080">Abonné</Button>
          </Actions>
        </Card>
      </Main>

      <Taskbar>
        <Slot $w={72}><Icon name="windows" /></Slot>
        <SearchBox>
          <Icon name="magnifier" />
          <SearchHint>Type here to search</SearchHint>
          <Llama />
        </SearchBox>
        <Slot $w={71}><Icon name="cortana" /></Slot>
        <Slot $w={72}><Icon name="taskview" /></Slot>
        <Task $ml={11} $pl={7}><Icon name="drive" size={34} />E:\</Task>
        <Task $ml={14} $pl={7}><Icon name="chrome" size={34} />Portfolio | ...</Task>
        <Task $ml={6} $w={166} $pl={13} $bg="#4b4d4e"><Icon name="chrome" size={34} />localhost:3...</Task>
        {pinnedLeft.map((n) => <Slot key={n} $w={68}><Icon name={n} size={n === "steam" ? 33 : 36} /></Slot>)}
        <Task $ml={8} $pl={7}><Icon name="vscode" size={36} />Get Started...</Task>
        <Slot $w={7} />
        {pinnedRight.map((n) => <Slot key={n} $w={67.7}><Icon name={n} size={34} /></Slot>)}
        <Task $ml={5}><Icon name="discord" size={36} />Buster, Olili...</Task>
        <Task $ml={13} $bg="#807634" $line="#ffe900"><Icon name="steam" size={34} />Steam</Task>
        <Task $ml={13}><Icon name="spotify" size={34} />A Tribe Call...</Task>
        <Task $ml={13}><Icon name="edge" size={36} />enonce.pdf...</Task>
        <Slot $w={72} $ml={15}><Icon name="people" /></Slot>
        <Slot $w={36} $ml={36}><Icon name="weather" size={34} /></Slot>
        <Temperature>22°C</Temperature>
        <Slot $w={36} $ml={12}><Icon name="chevUp" size={22} /></Slot>
        <Slot $w={36}><Icon name="speaker" /></Slot>
        <Slot $w={37}><Icon name="monitor" /></Slot>
        <Slot $w={36}><Icon name="speaker" /></Slot>
        <Language $w={53}>FRA</Language>
        <Clock><span>4:19 PM</span><span>6/28/2022</span></Clock>
        <Slot $w={59}><Icon name="notification" /></Slot>
      </Taskbar>
    </Screen>
  );
}
